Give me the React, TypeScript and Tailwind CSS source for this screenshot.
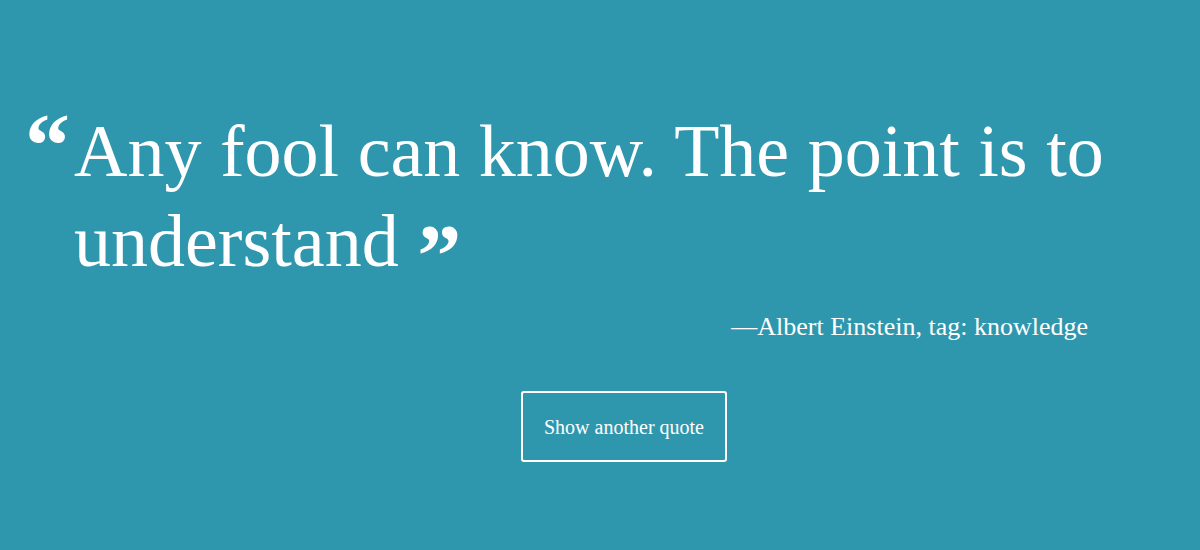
export default function App() {
  const serif = "font-['Liberation_Serif','Times_New_Roman',serif]";

  return (
    <div className={`min-h-[550px] w-full bg-[#2f97ad] text-white ${serif}`}>
      <div className="pt-[101px] pl-[25px] pr-[25px]">
        <div className="flex items-baseline">
          <span className="w-[49px] shrink-0 text-[90px] font-bold leading-[90px]">
            &ldquo;
          </span>
          <p className="flex-1 text-[74px] leading-[90px]">
            Any fool can know. The point is to understand{" "}
            <span className="relative top-[19px] text-[88px] font-bold leading-[0]">
              &rdquo;
            </span>
          </p>
        </div>

        <div className="mt-[25px] flex justify-end pr-[87px]">
          <p className="text-[26px] leading-[32px]">
            —Albert Einstein, tag: knowledge
          </p>
        </div>
      </div>

      <div className="mt-[48px] flex justify-center pl-[48px]">
        <button className="h-[71px] w-[206px] rounded-[3px] border-2 border-white text-[20px] text-white">
          Show another quote
        </button>
      </div>
    </div>
  );
}
